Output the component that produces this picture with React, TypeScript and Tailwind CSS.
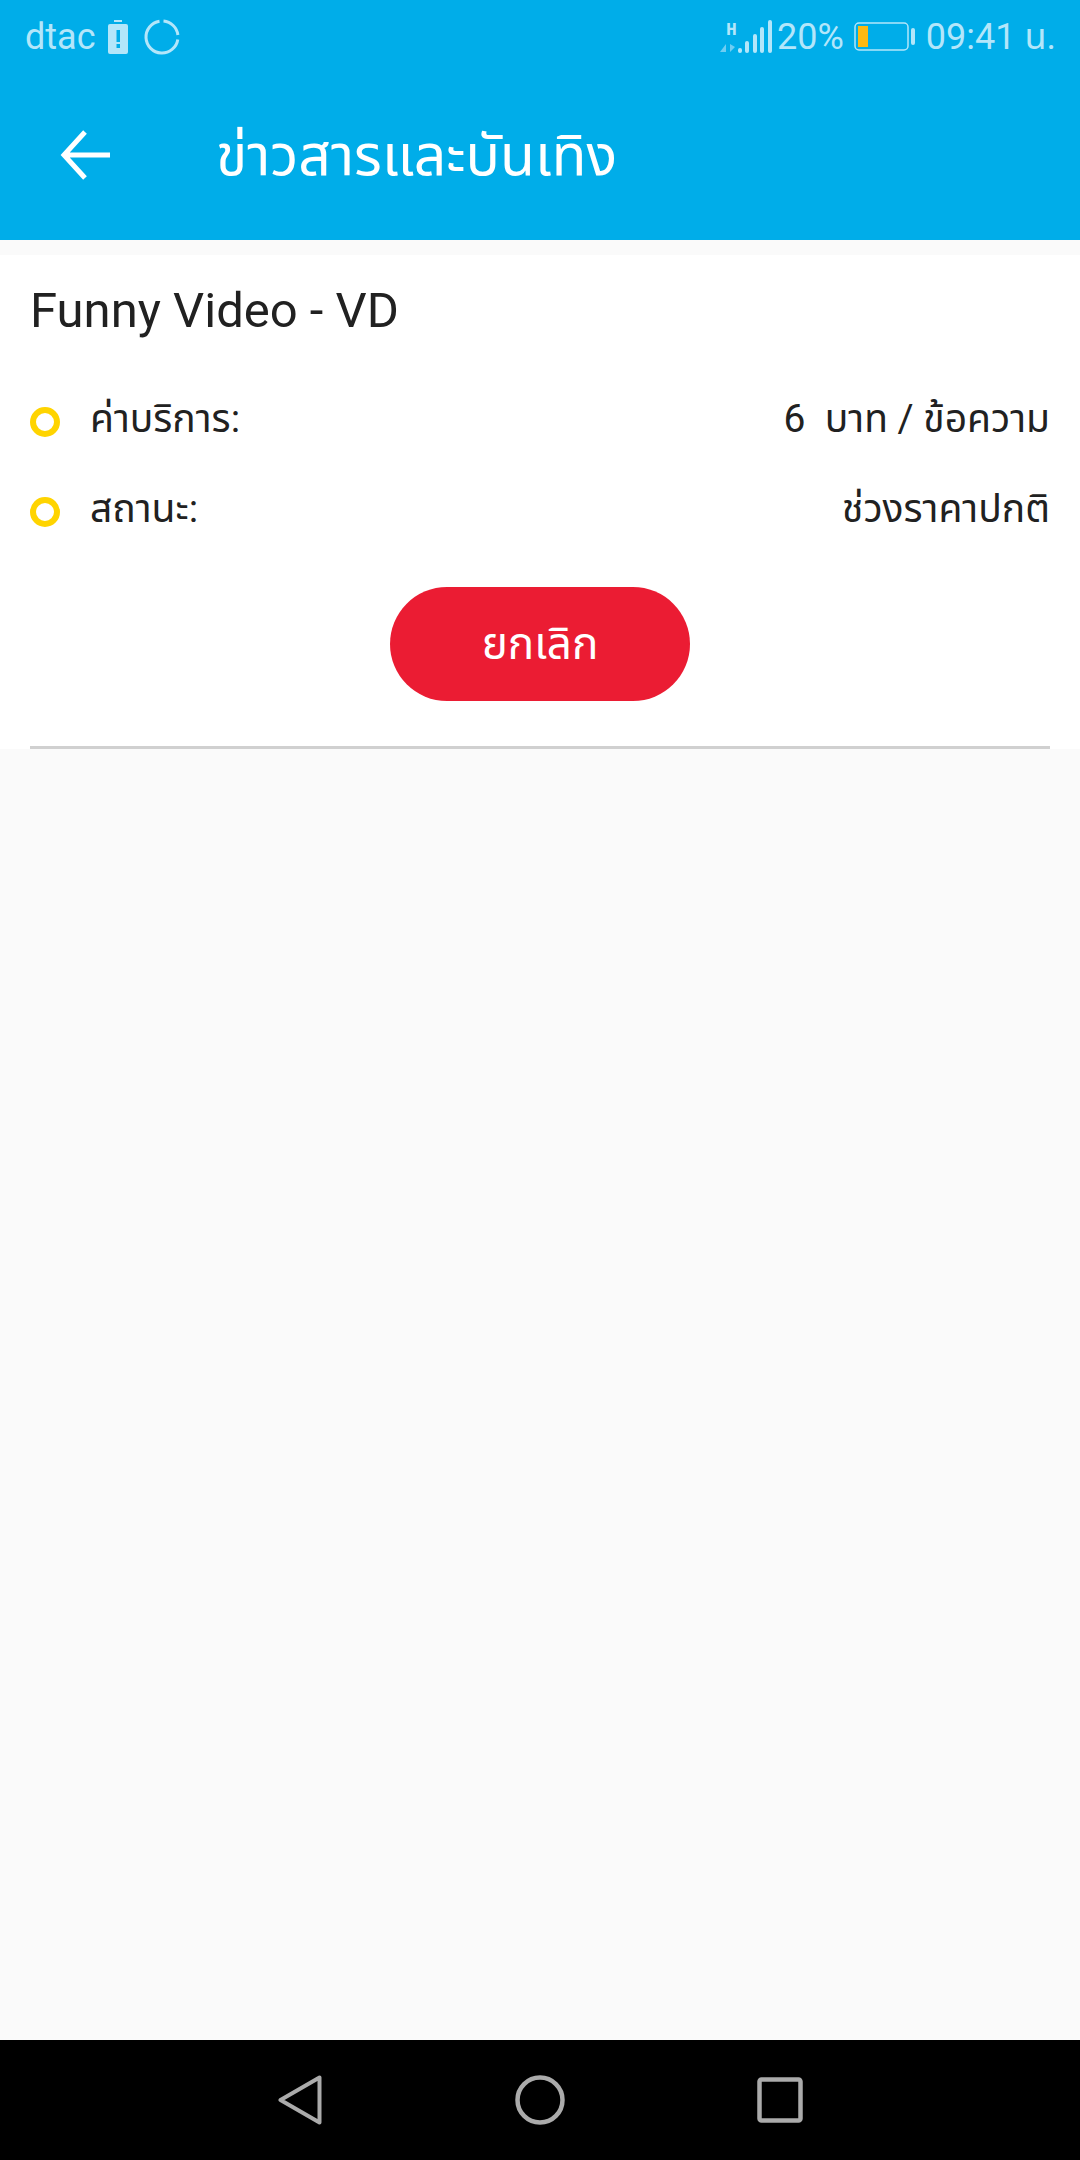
export default function App() {
  const font = { fontFamily: 'Roboto, "Noto Sans Thai", "Noto Sans", sans-serif' };
  return (
    <div className="w-[1080px] h-[2160px] flex flex-col bg-[#fafafa] font-['Roboto','Noto_Sans_Thai','Noto_Sans',sans-serif] overflow-hidden">
      <div className="h-[240px] bg-[#00ade9] flex flex-col shrink-0">
        <div className="h-[74px] flex items-center justify-between pl-[25px] pr-[24px] text-[#b3e6fa] text-[36px]">
          <div className="flex items-center">
            <span>dtac</span>
            <svg className="ml-[12px]" width="20" height="34" viewBox="0 0 20 34">
              <rect x="6" y="0" width="8" height="2" fill="#b3e6fa" />
              <rect x="0" y="4" width="20" height="30" rx="2" fill="#b3e6fa" />
              <rect x="8.5" y="10" width="3.5" height="12" fill="#00ade9" />
              <rect x="8.5" y="24" width="3.5" height="4" fill="#00ade9" />
            </svg>
            <svg className="ml-[16px]" width="36" height="36" viewBox="0 0 36 36" fill="none" stroke="#b3e6fa" strokeWidth="3">
              <path d="M15.5 2.2 A16 16 0 1 0 33.8 20.5" />
              <path d="M19.5 2.1 A16 16 0 0 1 33.9 16" />
            </svg>
          </div>
          <div className="flex items-center">
            <svg width="53" height="36" viewBox="0 0 53 36">
              <text x="6" y="16" fontSize="18" fontWeight="700" fill="#b3e6fa" fontFamily="Liberation Mono">H</text>
              <path d="M0 33 L6 25 V33Z M10 33 V25 L15 28Z" fill="#6fcdf2" />
              <rect x="18" y="29" width="4" height="5" rx="2" fill="#b3e6fa" />
              <rect x="25" y="22" width="4" height="12" rx="2" fill="#b3e6fa" />
              <rect x="33" y="15" width="4" height="19" rx="2" fill="#b3e6fa" />
              <rect x="40" y="8" width="4" height="26" rx="2" fill="#b3e6fa" />
              <rect x="48" y="1" width="4" height="33" rx="2" fill="#b3e6fa" />
            </svg>
            <span className="ml-[4px]">20%</span>
            <svg className="ml-[10px]" width="62" height="30" viewBox="0 0 62 30">
              <rect x="1" y="1" width="53" height="27" rx="4" fill="none" stroke="#b3e6fa" strokeWidth="1.5" />
              <rect x="4" y="4" width="10" height="21" fill="#fdb913" />
              <rect x="57" y="6" width="4" height="17" rx="2" fill="#b3e6fa" />
            </svg>
            <span className="ml-[10px]">09:41 น.</span>
          </div>
        </div>
        <div className="flex items-center flex-1 pb-[4px] pl-[60px]">
          <svg width="50" height="50" viewBox="0 0 50 50" fill="none" stroke="#ffffff" strokeWidth="5">
            <path d="M50 25 H4 M25 2 L4 25 L25 48" />
          </svg>
          <span className="ml-[106px] text-white text-[57px] leading-none" style={font}>ข่าวสารและบันเทิง</span>
        </div>
      </div>
      <div className="mt-[15px] h-[494px] bg-white px-[30px] flex flex-col shrink-0" style={font}>
        <div className="mt-[26px] text-[49px] leading-[60px] text-[#212121]">Funny Video - VD</div>
        <div className="mt-[33px] flex items-center justify-between h-[90px] text-[39px] text-[#212121]">
          <div className="flex items-center">
            <span className="mt-[5px] w-[30px] h-[30px] rounded-full border-[6px] border-[#ffd400]" />
            <span className="ml-[30px]">ค่าบริการ:</span>
          </div>
          <span>6&nbsp; บาท / ข้อความ</span>
        </div>
        <div className="flex items-center justify-between h-[90px] text-[39px] text-[#212121]">
          <div className="flex items-center">
            <span className="mt-[5px] w-[30px] h-[30px] rounded-full border-[6px] border-[#ffd400]" />
            <span className="ml-[30px]">สถานะ:</span>
          </div>
          <span>ช่วงราคาปกติ</span>
        </div>
        <div className="mt-[33px] flex justify-center">
          <button className="w-[300px] h-[114px] rounded-full bg-[#eb1c33] text-white text-[44px]">ยกเลิก</button>
        </div>
        <div className="mt-auto h-[3px] bg-[#d0d0d0]" />
      </div>
      <div className="flex-1" />
      <div className="h-[120px] bg-black flex items-center justify-center shrink-0">
        <div className="w-[240px] flex justify-center">
          <svg width="44" height="50" viewBox="0 0 44 50" fill="none" stroke="#ababab" strokeWidth="4" strokeLinejoin="round">
            <path d="M2.5 25 L41.5 2.5 V47.5 Z" />
          </svg>
        </div>
        <div className="w-[240px] flex justify-center">
          <svg width="50" height="50" viewBox="0 0 50 50" fill="none" stroke="#ababab" strokeWidth="4.5">
            <circle cx="25" cy="25" r="22.5" />
          </svg>
        </div>
        <div className="w-[240px] flex justify-center">
          <svg width="46" height="46" viewBox="0 0 46 46" fill="none" stroke="#ababab" strokeWidth="4.5" strokeLinejoin="round">
            <rect x="2.5" y="2.5" width="41" height="41" rx="2" />
          </svg>
        </div>
      </div>
    </div>
  );
}
